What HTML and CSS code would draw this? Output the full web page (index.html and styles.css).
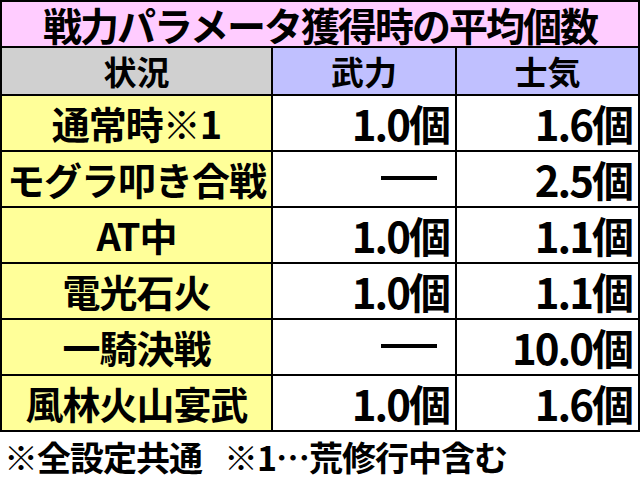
FILE: index.html
```html
<!DOCTYPE html>
<html lang="ja">
<head>
<meta charset="utf-8">
<link rel="stylesheet" href="styles.css">
</head>
<body>
<div class="sheet">
  <div class="title">戦力パラメータ獲得時の平均個数</div>
  <div class="hd hd-gray">状況</div>
  <div class="hd hd-blue">武力</div>
  <div class="hd hd-blue">士気</div>

  <div class="lbl">通常時※1</div>
  <div class="num">1.0個</div>
  <div class="num">1.6個</div>

  <div class="lbl">モグラ叩き合戦</div>
  <div class="num dashcell"><span class="dash"></span></div>
  <div class="num">2.5個</div>

  <div class="lbl">AT中</div>
  <div class="num">1.0個</div>
  <div class="num">1.1個</div>

  <div class="lbl">電光石火</div>
  <div class="num">1.0個</div>
  <div class="num">1.1個</div>

  <div class="lbl">一騎決戦</div>
  <div class="num dashcell"><span class="dash"></span></div>
  <div class="num">10.0個</div>

  <div class="lbl">風林火山宴武</div>
  <div class="num">1.0個</div>
  <div class="num">1.6個</div>
</div>
<div class="note"><span class="note-a">※全設定共通</span><span>※1…荒修行中含む</span></div>
</body>
</html>
```

FILE: styles.css
```css
html, body {
  margin: 0;
  padding: 0;
  background: #ffffff;
}
body {
  width: 640px;
  height: 481px;
  overflow: hidden;
  font-family: "Noto Sans CJK JP", "Noto Sans", sans-serif;
  font-weight: 700;
  color: #000;
}
.sheet {
  display: grid;
  grid-template-columns: 269px 182px 181px;
  grid-template-rows: 44px 46px repeat(6, 54px);
  gap: 2px;
  padding: 2px;
  background: #000;
  width: 640px;
  box-sizing: border-box;
}
.sheet > div {
  display: flex;
  align-items: center;
  white-space: nowrap;
  line-height: 1;
}
.title {
  grid-column: 1 / 4;
  background: #ffccff;
  justify-content: center;
  font-size: 39px;
  letter-spacing: -2px;
}
.hd {
  justify-content: center;
  font-size: 33px;
}
.hd-gray { background: #d0d0d0; }
.hd-blue { background: #c0c0ff; }
.lbl {
  background: #ffff99;
  justify-content: center;
  font-size: 38px;
  letter-spacing: -1px;
}
.num {
  background: #ffffff;
  justify-content: flex-end;
  padding-right: 6px;
  font-size: 42px;
  letter-spacing: -2px;
}
.dashcell {
  padding-right: 18px;
}
.dash {
  display: block;
  width: 56px;
  height: 4px;
  background: #000;
  margin-top: -2px;
}
.note {
  display: flex;
  font-size: 34px;
  line-height: 1;
  padding: 8px 0 0 4px;
  letter-spacing: -1px;
  white-space: nowrap;
}
.note-a { margin-right: 22px; }
```
